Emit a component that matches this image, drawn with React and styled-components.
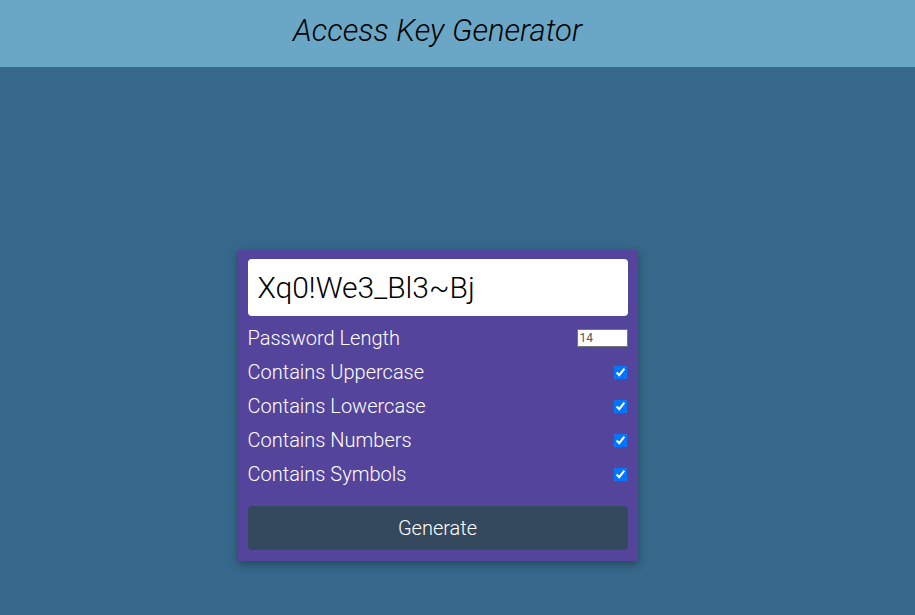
import React, { useState } from 'react';
import styled, { createGlobalStyle } from 'styled-components';

const GlobalStyle = createGlobalStyle`
  html, body {
    margin: 0;
    padding: 0;
    background: #36688b;
    font-family: Roboto, "Liberation Sans", sans-serif;
  }
  * { box-sizing: border-box; }
`;

const options = [
  { key: 'upper', label: 'Contains Uppercase' },
  { key: 'lower', label: 'Contains Lowercase' },
  { key: 'numbers', label: 'Contains Numbers' },
  { key: 'symbols', label: 'Contains Symbols' },
];

const App = () => {
  const [length, setLength] = useState(14);
  const [flags, setFlags] = useState({ upper: true, lower: true, numbers: true, symbols: true });

  return (
    <Page>
      <GlobalStyle />
      <Header>
        <Title>Access Key Generator</Title>
      </Header>
      <Main>
        <Card>
          <Output>Xq0!We3_Bl3~Bj</Output>
          <Row>
            <Label>Password Length</Label>
            <LengthInput
              type="number"
              value={length}
              onChange={(e) => setLength(e.target.value)}
            />
          </Row>
          {options.map((o) => (
            <Row key={o.key}>
              <Label>{o.label}</Label>
              <Check
                type="checkbox"
                checked={flags[o.key]}
                onChange={() => setFlags({ ...flags, [o.key]: !flags[o.key] })}
              />
            </Row>
          ))}
          <Button>Generate</Button>
        </Card>
      </Main>
    </Page>
  );
};

export default App;

const Page = styled.div`
  min-height: 615px;
  background: #36688b;
`

const Header = styled.header`
  height: 67px;
  background: #6aa7c6;
  display: flex;
  align-items: center;
  justify-content: center;
  padding-right: 40px;
`

const Title = styled.h1`
  margin: 0 0 7px;
  font-size: 31px;
  font-weight: 300;
  font-style: italic;
  color: #000;
`

const Main = styled.main`
  display: flex;
  justify-content: center;
  padding: 183px 40px 0 0;
`

const Card = styled.div`
  width: 400px;
  background: #54449b;
  padding: 9px 10px 11px;
  box-shadow: 0 3px 8px rgba(0, 0, 0, 0.35);
  display: flex;
  flex-direction: column;
`

const Output = styled.div`
  height: 57px;
  background: #fff;
  border-radius: 4px;
  padding: 0 10px;
  display: flex;
  align-items: center;
  font-size: 30px;
  font-weight: 300;
  color: #000;
  margin-bottom: 5px;
`

const Row = styled.div`
  height: 34px;
  display: flex;
  align-items: center;
  justify-content: space-between;
`

const Label = styled.span`
  color: #fff;
  font-size: 20px;
  font-weight: 300;
`

const LengthInput = styled.input`
  width: 51px;
  height: 18px;
  font-size: 12px;
  font-family: Roboto, sans-serif;
  color: #555;
  padding: 0 2px;
  border: 1px solid #767676;
  margin: 0;
`

const Check = styled.input`
  width: 13px;
  height: 13px;
  margin: 0 1px 0 0;
`

const Button = styled.button`
  margin-top: 15px;
  height: 44px;
  background: #34495e;
  border: none;
  border-radius: 4px;
  color: #fff;
  font-size: 20px;
  font-weight: 300;
  font-family: Roboto, sans-serif;
`
